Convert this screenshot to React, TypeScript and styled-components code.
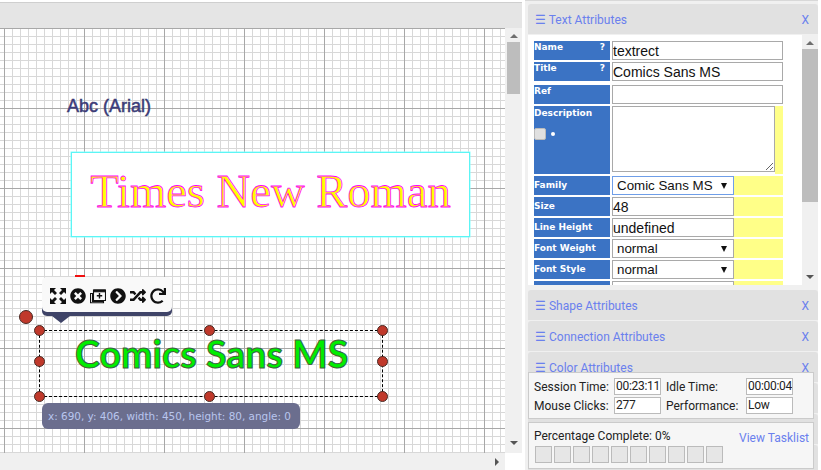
import React from 'react'
import styled, { createGlobalStyle } from 'styled-components'
import { FaTimesCircle, FaChevronCircleRight, FaRandom, FaRedo } from 'react-icons/fa'

const GlobalStyle = createGlobalStyle`
  html, body {
    margin: 0;
    padding: 0;
    background: #fff;
    overflow: hidden;
  }
  * {
    box-sizing: border-box;
  }
`

const Page = styled.div`
  display: flex;
  width: 821px;
  height: 470px;
  overflow: hidden;
  font-family: Roboto, 'Liberation Sans', sans-serif;
`
const Workspace = styled.div`
  display: flex;
  flex-direction: column;
  width: 525px;
  height: 470px;
`
const TopBar = styled.div`
  width: 522px;
  height: 26px;
  flex: none;
  margin-top: 2px;
  border-top: 1px solid #cfcfcf;
  background: #e5e5e5;
`
const StageRow = styled.div`
  display: flex;
  height: 425px;
  width: 522px;
`
const Canvas = styled.div`
  position: relative;
  width: 505px;
  height: 425px;
  overflow: hidden;
  background-color: #fff;
  background-image:
    linear-gradient(to right, #a8a8a8 1px, transparent 1px),
    linear-gradient(to bottom, #a8a8a8 1px, transparent 1px),
    linear-gradient(to right, #d8d8d8 1px, transparent 1px),
    linear-gradient(to bottom, #d8d8d8 1px, transparent 1px);
  background-size: 80px 80px, 80px 80px, 8px 8px, 8px 8px;
  background-position: 4px 0, 0 0, 4px 0, 0 0;
`
const ScrollTrack = styled.div`
  display: flex;
  flex-direction: column;
  align-items: center;
  justify-content: space-between;
  width: 17px;
  background: #f0f0f0;
`
const Thumb = styled.div<{ $h: number; $mt: number; $w: number }>`
  width: ${({ $w }) => $w}px;
  height: ${({ $h }) => $h}px;
  margin-top: ${({ $mt }) => $mt}px;
  background: #bdbdbd;
`
const ArrowUp = styled.div`
  flex: none;
  margin-top: 6px;
  width: 0;
  height: 0;
  border-left: 4px solid transparent;
  border-right: 4px solid transparent;
  border-bottom: 4px solid #6e6e6e;
`
const ArrowDown = styled.div<{ $mb: number }>`
  flex: none;
  margin-top: auto;
  margin-bottom: ${({ $mb }) => $mb}px;
  width: 0;
  height: 0;
  border-left: 4px solid transparent;
  border-right: 4px solid transparent;
  border-top: 4px solid #555;
`
const BottomBar = styled.div`
  display: flex;
  align-items: center;
  justify-content: flex-end;
  width: 505px;
  height: 17px;
  padding-right: 6px;
  background: #f0f0f0;
`
const ArrowRight = styled.div`
  width: 0;
  height: 0;
  border-top: 4px solid transparent;
  border-bottom: 4px solid transparent;
  border-left: 4px solid #555;
`
const ArialNode = styled.div`
  position: absolute;
  left: 67px;
  top: 67px;
  font: 18px/22px 'Liberation Sans', sans-serif;
  color: #3b3b82;
  -webkit-text-stroke: 0.5px #3b3b6e;
  white-space: nowrap;
`
const TimesNode = styled.div`
  position: absolute;
  left: 71px;
  top: 124px;
  width: 399px;
  height: 85px;
  display: flex;
  align-items: center;
  justify-content: center;
  padding-bottom: 6px;
  background: #fff;
  border: 1px solid #5cf5f5;
  box-shadow: 0 0 0 0.5px #8ff;
  font: 46.6px/1 'Liberation Serif', serif;
  color: #ffff00;
  -webkit-text-stroke: 0.8px #ff00ff;
  white-space: nowrap;
`
const ComicsNode = styled.div`
  position: absolute;
  left: 75px;
  top: 302px;
  font: bold 37.5px/48px 'Lato', 'Open Sans', sans-serif;
  letter-spacing: 0.05px;
  color: #00ee00;
  -webkit-text-stroke: 1px #3f5f3f;
  white-space: nowrap;
`
const Selection = styled.div`
  position: absolute;
  left: 39px;
  top: 302px;
  width: 344px;
  height: 67px;
  border: 1px dashed #000;
`
const Handle = styled.span<{ $x: number; $y: number; $big?: boolean }>`
  position: absolute;
  left: ${({ $x, $big }) => $x - ($big ? 7 : 5.5)}px;
  top: ${({ $y, $big }) => $y - ($big ? 7 : 5.5) - 28}px;
  width: ${({ $big }) => ($big ? 14 : 11)}px;
  height: ${({ $big }) => ($big ? 14 : 11)}px;
  border-radius: 50%;
  background: #c0392b;
  border: 1px solid #4a2a24;
`
const RedPeek = styled.span`
  position: absolute;
  left: 75px;
  top: 247px;
  width: 10px;
  height: 3px;
  background: #f01010;
`
const ToolPopup = styled.div`
  position: absolute;
  left: 42px;
  top: 249px;
  display: flex;
  align-items: center;
  gap: 4px;
  width: 130px;
  height: 35px;
  padding: 2px 0 0 8px;
  background: #f9f9f9;
  border-radius: 5px;
  box-shadow: 0 4px 0 #3f4468;
  color: #111;

  &::after {
    content: '';
    position: absolute;
    left: 10px;
    top: 39px;
    border-left: 9px solid transparent;
    border-right: 9px solid transparent;
    border-top: 7px solid #3f4468;
  }
`
const InfoTip = styled.div`
  position: absolute;
  left: 42px;
  top: 375px;
  width: 258px;
  height: 26px;
  padding-left: 6px;
  border-radius: 6px;
  background: #6b6e8e;
  color: #b9c6ee;
  font: 10.45px/26px 'DejaVu Sans', sans-serif;
  white-space: nowrap;
`
const Sidebar = styled.div`
  position: relative;
  width: 293px;
  height: 470px;
  padding-top: 3px;
  background: #f0f0f0;
  border-top: 1px solid #d8d8d8;
  overflow: hidden;
`
const PanelHeader = styled.div<{ $first?: boolean }>`
  display: flex;
  align-items: center;
  justify-content: space-between;
  height: 30px;
  margin-bottom: ${({ $first }) => ($first ? 0 : 1)}px;
  margin-left: 3px;
  width: 290px;
  padding: 2px 9px 0 7px;
  background: #e1e1e1;
  border-radius: 3px 3px 0 0;
  color: #6a80ee;
  font-size: 12px;
`
const PanelBody = styled.div`
  display: flex;
  margin-left: 3px;
  width: 290px;
  height: 250px;
  margin-top: 1px;
  margin-bottom: 5px;
  background: #fff;
  overflow: hidden;
`
const Fields = styled.div`
  width: 274px;
  padding: 5px 0 0 6px;
`
const Row = styled.div<{ $h?: number; $mt?: number }>`
  display: flex;
  height: ${({ $h }) => $h ?? 19}px;
  margin-top: ${({ $mt }) => $mt ?? 2}px;
  &:first-child {
    margin-top: 1px;
  }
`
const Label = styled.div`
  flex: none;
  display: flex;
  align-items: flex-start;
  justify-content: space-between;
  width: 76px;
  margin-right: 2px;
  padding: 0 2px 0 0;
  background: #3b73c4;
  color: #fff;
  font: bold 9px/13px 'DejaVu Sans', sans-serif;
`
const CenterLabel = styled(Label)`
  align-items: center;
`
const DescLabel = styled(Label)`
  display: block;
  padding-top: 1px;
`
const Mark = styled.span`
  padding-right: 3px;
`
const Checkish = styled.div`
  display: flex;
  align-items: center;
  gap: 5px;
  margin-top: 8px;
`
const Box = styled.span`
  width: 12px;
  height: 12px;
  border-radius: 2px;
  background: #e0e0e0;
  border: 1px solid #bbb;
`
const Dot = styled.span`
  width: 4px;
  height: 4px;
  border-radius: 50%;
  background: #fff;
`
const TextField = styled.input<{ $w?: number }>`
  flex: none;
  width: ${({ $w }) => $w ?? 171}px;
  height: 100%;
  padding: 0;
  border: 1px solid #a9a9a9;
  outline: none;
  background: #fff;
  color: #111;
  font: 14px 'Liberation Sans', sans-serif;
`
const Area = styled.textarea`
  flex: none;
  width: 163px;
  height: 66px;
  padding: 0;
  border: 1px solid #a9a9a9;
  outline: none;
  background: #fff;
`
const FakeSelect = styled.div<{ $focus?: boolean }>`
  flex: none;
  display: flex;
  align-items: center;
  justify-content: space-between;
  width: 122px;
  height: 100%;
  padding: 0 6px 0 4px;
  border: 1px solid ${({ $focus }) => ($focus ? '#6f9ee8' : '#a9a9a9')};
  background: #fff;
  color: #111;
  font: 13.33px 'Liberation Sans', sans-serif;
  white-space: nowrap;
`
const Caret = styled.span`
  width: 0;
  height: 0;
  border-left: 3.5px solid transparent;
  border-right: 3.5px solid transparent;
  border-top: 6px solid #111;
`
const Yellow = styled.div<{ $w: number }>`
  flex: none;
  width: ${({ $w }) => $w}px;
  background: #ffff88;
`
const BodyScroll = styled(ScrollTrack)`
  width: 16px;
  flex: none;
`
const Overlay = styled.div<{ $top: number; $h: number }>`
  position: absolute;
  left: 3px;
  top: ${({ $top }) => $top}px;
  width: 286px;
  height: ${({ $h }) => $h}px;
  background: #f6f6f6;
  border: 1px solid #cbcbcb;
  color: #222;
  font-size: 12px;
`
const StatsGrid = styled.div`
  display: grid;
  grid-template-columns: 80px 47px 5px 80px 47px;
  grid-auto-rows: 17px;
  row-gap: 2px;
  align-items: center;
  padding: 5px 0 0 5px;
`
const StatValue = styled.div`
  height: 17px;
  padding-left: 1px;
  background: #fff;
  border: 1px solid #bbb;
  font-size: 12px;
  letter-spacing: -0.3px;
  line-height: 15px;
  white-space: nowrap;
  overflow: hidden;
`
const ProgressHead = styled.div`
  display: flex;
  justify-content: space-between;
  height: 21px;
  padding: 5px 4px 0 5px;
  line-height: 16px;
`
const Tasklist = styled.span`
  color: #6a80ee;
  transform: translateY(2px);
`
const Cells = styled.div`
  display: flex;
  gap: 2px;
  padding: 2px 0 0 6px;
`
const Cell = styled.span`
  width: 17px;
  height: 17px;
  background: #e6e6e6;
  border: 1px solid #bbb;
`
const Icon = styled.svg`
  width: 16px;
  height: 16px;
  flex: none;
`

const ExpandIcon = () => (
  <Icon viewBox="0 0 16 16" fill="#111">
    <path d="M0 0h6L4 2l3 3-2 2-3-3-2 2zM16 0v6l-2-2-3 3-2-2 3-3-2-2zM0 16v-6l2 2 3-3 2 2-3 3 2 2zM16 16h-6l2-2-3-3 2-2 3 3 2-2z" />
  </Icon>
)
const WindowPlusIcon = () => (
  <Icon viewBox="0 0 16 16" fill="none" stroke="#111">
    <path d="M.5 5.5h2v8h11v1.2H.5zM3.5 2h12v10.5h-12z" strokeWidth="1.1" />
    <path d="M3.5 2h12v1.8h-12z" fill="#111" />
    <path d="M9.5 5v5.5M6.8 7.8h5.4" strokeWidth="1.4" />
  </Icon>
)

const handles: [number, number][] = [
  [39, 330], [209, 330], [382, 330],
  [39, 361], [382, 361],
  [39, 396], [209, 396], [382, 396],
]

type FieldProps = { label: string; children: React.ReactNode }

const Field = ({ label, children }: FieldProps) => (
  <Row>
    <CenterLabel>{label}</CenterLabel>
    {children}
  </Row>
)

const Select = ({ value, focus }: { value: string; focus?: boolean }) => (
  <FakeSelect $focus={focus}>
    {value}
    <Caret />
  </FakeSelect>
)

const App = (): React.ReactElement => (
  <Page>
    <GlobalStyle />
    <Workspace>
      <TopBar />
      <StageRow>
        <Canvas>
          <ArialNode>Abc (Arial)</ArialNode>
          <TimesNode>Times New Roman</TimesNode>
          <ComicsNode>Comics Sans MS</ComicsNode>
          <Selection />
          {handles.map(([x, y]) => (
            <Handle key={`${x}-${y}`} $x={x} $y={y} />
          ))}
          <Handle $x={26} $y={317} $big />
          <RedPeek />
          <ToolPopup>
            <ExpandIcon />
            <FaTimesCircle size={16} />
            <WindowPlusIcon />
            <FaChevronCircleRight size={16} />
            <FaRandom size={16} />
            <FaRedo size={16} />
          </ToolPopup>
          <InfoTip>x: 690, y: 406, width: 450, height: 80, angle: 0</InfoTip>
        </Canvas>
        <ScrollTrack>
          <ArrowUp />
          <Thumb $w={13} $h={52} $mt={4} />
          <ArrowDown $mb={8} />
        </ScrollTrack>
      </StageRow>
      <BottomBar>
        <ArrowRight />
      </BottomBar>
    </Workspace>
    <Sidebar>
      <PanelHeader $first>
        <span>☰ Text Attributes</span>
        <span>X</span>
      </PanelHeader>
      <PanelBody>
        <Fields>
          <Row>
            <Label>
              Name<Mark>?</Mark>
            </Label>
            <TextField readOnly value="textrect" />
          </Row>
          <Row>
            <Label>
              Title<Mark>?</Mark>
            </Label>
            <TextField readOnly value="Comics Sans MS" />
          </Row>
          <Row $mt={4}>
            <Label>Ref</Label>
            <TextField readOnly value="" />
          </Row>
          <Row $h={68}>
            <DescLabel>
              Description
              <Checkish>
                <Box />
                <Dot />
              </Checkish>
            </DescLabel>
            <Area readOnly />
            <Yellow $w={8} />
          </Row>
          <Field label="Family">
            <Select value="Comic Sans MS" focus />
            <Yellow $w={49} />
          </Field>
          <Field label="Size">
            <TextField $w={122} readOnly value="48" />
            <Yellow $w={49} />
          </Field>
          <Field label="Line Height">
            <TextField $w={122} readOnly value="undefined" />
            <Yellow $w={49} />
          </Field>
          <Field label="Font Weight">
            <Select value="normal" />
            <Yellow $w={49} />
          </Field>
          <Field label="Font Style">
            <Select value="normal" />
            <Yellow $w={49} />
          </Field>
          <Field label="">
            <Select value="Middle Top" />
            <Yellow $w={49} />
          </Field>
        </Fields>
        <BodyScroll>
          <ArrowUp />
          <Thumb $w={16} $h={153} $mt={4} />
          <ArrowDown $mb={6} />
        </BodyScroll>
      </PanelBody>
      <PanelHeader>
        <span>☰ Shape Attributes</span>
        <span>X</span>
      </PanelHeader>
      <PanelHeader>
        <span>☰ Connection Attributes</span>
        <span>X</span>
      </PanelHeader>
      <PanelHeader>
        <span>☰ Color Attributes</span>
        <span>X</span>
      </PanelHeader>
      <PanelHeader />
      <PanelHeader />
      <PanelHeader />
      <Overlay $top={371} $h={47}>
        <StatsGrid>
          <span>Session Time:</span>
          <StatValue>00:23:11</StatValue>
          <span />
          <span>Idle Time:</span>
          <StatValue>00:00:04</StatValue>
          <span>Mouse Clicks:</span>
          <StatValue>277</StatValue>
          <span />
          <span>Performance:</span>
          <StatValue>Low</StatValue>
        </StatsGrid>
      </Overlay>
      <Overlay $top={421} $h={47}>
        <ProgressHead>
          <span>Percentage Complete: 0%</span>
          <Tasklist>View Tasklist</Tasklist>
        </ProgressHead>
        <Cells>
          {Array.from({ length: 10 }, (_, i) => (
            <Cell key={i} />
          ))}
        </Cells>
      </Overlay>
    </Sidebar>
  </Page>
)

export default App
